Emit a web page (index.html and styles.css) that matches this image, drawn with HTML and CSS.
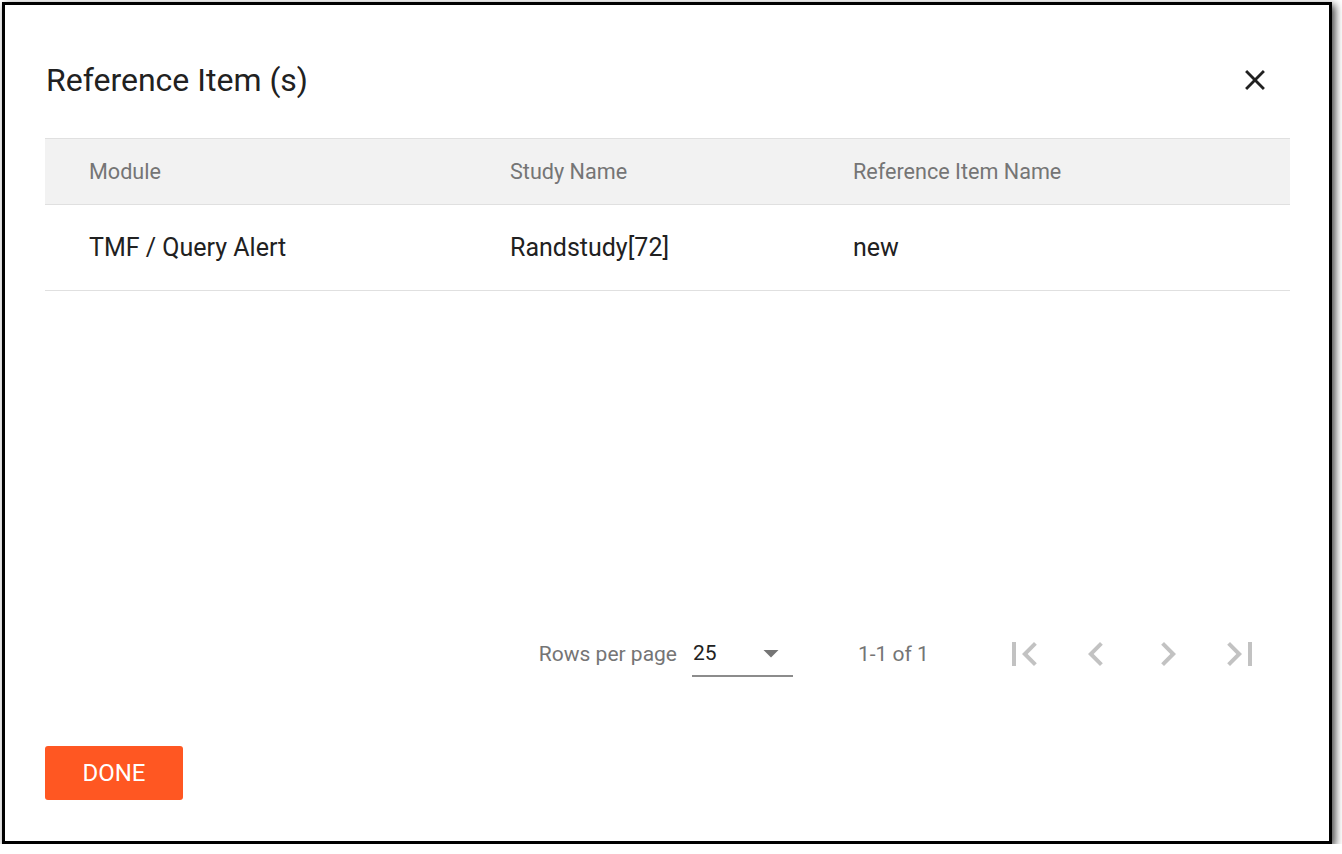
FILE: index.html
```html
<!DOCTYPE html>
<html>
  <head>
    <meta name="viewport" content="width=device-width, initial-scale=1.0" />
    <link rel="stylesheet" href="styles.css">
  </head>

  <body>
    <div class="frame">
      <div class="dialog-title">
        <h2>Reference Item (s)</h2>
        <button type="button" class="close" aria-label="close">
          <svg viewBox="0 0 24 24" width="34" height="34">
            <path d="M19 6.41L17.59 5 12 10.59 6.41 5 5 6.41 10.59 12 5 17.59 6.41 19 12 13.41 17.59 19 19 17.59 13.41 12z" />
          </svg>
        </button>
      </div>

      <div class="table-area">
        <div class="grid head">
          <div class="cell">Module</div>
          <div class="cell">Study Name</div>
          <div class="cell">Reference Item Name</div>
        </div>
        <div class="grid row">
          <div class="cell">TMF / Query Alert</div>
          <div class="cell">Randstudy[72]</div>
          <div class="cell">new</div>
        </div>
      </div>

      <div class="pagination">
        <span class="rows-label">Rows per page</span>
        <div class="select">
          <span>25</span>
          <svg viewBox="0 0 24 24" width="36" height="36">
            <path d="M7 10l5 5 5-5z" />
          </svg>
        </div>
        <span class="count">1-1 of 1</span>
        <div class="pager">
          <button type="button" disabled>
            <svg viewBox="0 0 24 24" width="48" height="48">
              <path d="M18.41 16.59L13.82 12l4.59-4.59L17 6l-6 6 6 6zM6 6h2v12H6z" />
            </svg>
          </button>
          <button type="button" disabled>
            <svg viewBox="0 0 24 24" width="48" height="48">
              <path d="M15.41 7.41L14 6l-6 6 6 6 1.41-1.41L10.83 12z" />
            </svg>
          </button>
          <button type="button" disabled>
            <svg viewBox="0 0 24 24" width="48" height="48">
              <path d="M10 6L8.59 7.41 13.17 12l-4.58 4.59L10 18l6-6z" />
            </svg>
          </button>
          <button type="button" disabled>
            <svg viewBox="0 0 24 24" width="48" height="48">
              <path d="M5.59 7.41L10.18 12l-4.59 4.59L7 18l6-6-6-6zM16 6h2v12h-2z" />
            </svg>
          </button>
        </div>
      </div>

      <div class="actions">
        <button type="button" class="done">DONE</button>
      </div>
    </div>
  </body>
</html>
```

FILE: styles.css
```css
body {
  margin: 0;
  background: #fff;
  font-family: Roboto, 'Liberation Sans', sans-serif;
}

.frame {
  box-sizing: border-box;
  width: 1330px;
  height: 842px;
  margin: 2px 0 0 2px;
  border: 3px solid #000;
  background: #fff;
  box-shadow: 3px 3px 8px rgba(0, 0, 0, 0.75);
  display: flex;
  flex-direction: column;
  padding: 0 39px 41px 40px;
}

.dialog-title {
  display: flex;
  align-items: center;
  justify-content: space-between;
  height: 133px;
  padding-top: 16px;
  box-sizing: border-box;
}

.dialog-title h2 {
  margin: 0 0 0 1px;
  font-size: 32px;
  font-weight: 400;
  color: #212121;
}

.close {
  border: none;
  background: none;
  padding: 0;
  margin-right: 18px;
  width: 34px;
  height: 34px;
  cursor: pointer;
  fill: #212121;
}

.table-area {
  flex: 1;
}

.grid {
  display: grid;
  grid-template-columns: 421px 343px 1fr;
  align-items: center;
  border-bottom: 1px solid #e0e0e0;
}

.grid .cell {
  padding-left: 44px;
}

.head {
  height: 67px;
  box-sizing: border-box;
  background: #f2f2f2;
  border-top: 1px solid #e0e0e0;
  font-size: 21.6px;
  color: #757575;
}

.row {
  height: 86px;
  box-sizing: border-box;
  font-size: 25px;
  color: #212121;
}

.pagination {
  display: flex;
  align-items: center;
  justify-content: flex-end;
  height: 48px;
  padding-right: 26px;
  font-size: 21px;
  color: #757575;
}

.rows-label {
  margin-right: 15px;
}

.select {
  position: relative;
  box-sizing: border-box;
  width: 101px;
  height: 46px;
  display: flex;
  align-items: center;
  padding: 0 0 0 1px;
  border-bottom: 2px solid #8c8c8c;
  color: #212121;
}

.select svg {
  position: absolute;
  right: 4px;
  top: 4px;
  fill: #757575;
}

.count {
  margin-left: 65px;
  width: 142px;
}

.pager {
  display: flex;
  gap: 24px;
}

.pager button {
  border: none;
  background: none;
  padding: 0;
  width: 48px;
  height: 48px;
  fill: #c2c2c2;
}

.actions {
  margin-top: 68px;
}

.done {
  width: 138px;
  height: 54px;
  border: none;
  border-radius: 3px;
  background: #ff5722;
  color: #fff;
  font-family: Roboto, 'Liberation Sans', sans-serif;
  font-size: 24px;
  font-weight: 400;
  cursor: pointer;
}
```
